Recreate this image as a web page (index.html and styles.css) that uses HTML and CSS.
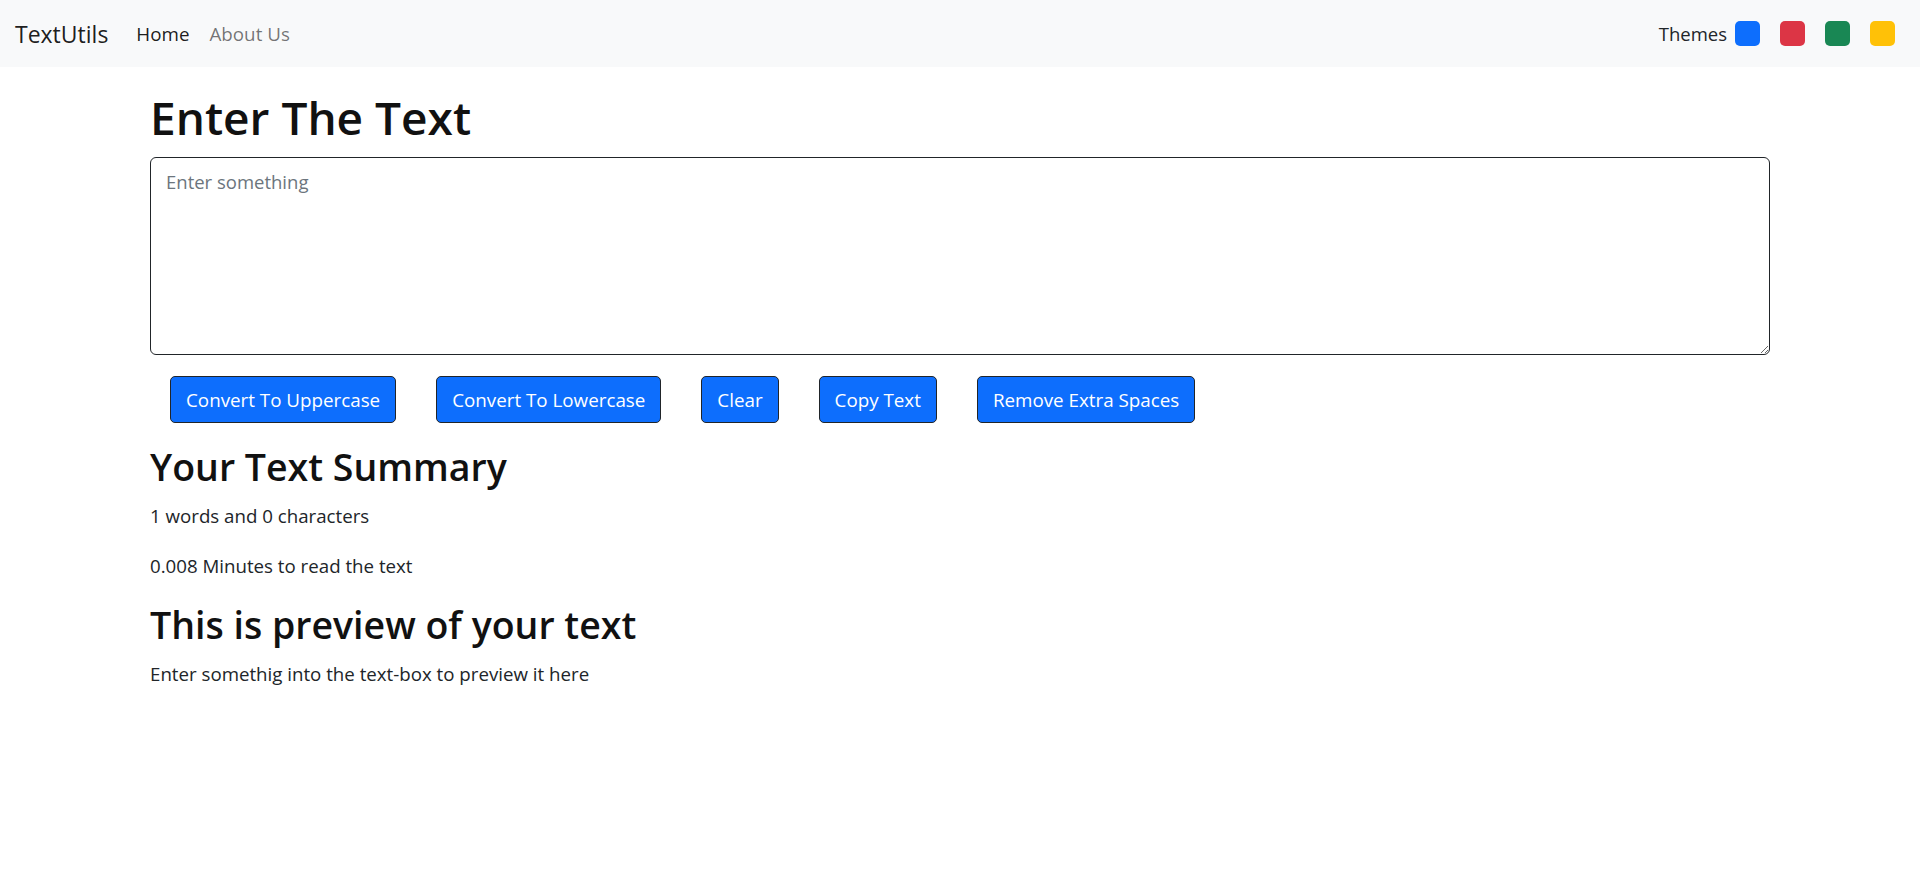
FILE: index.html
```html
<!DOCTYPE html>
<html lang="en">
<head>
<meta charset="utf-8">
<title>TextUtils</title>
<link rel="stylesheet" href="styles.css">
</head>
<body>
<nav class="navbar">
  <div class="nav-left">
    <a class="brand" href="#">TextUtils</a>
    <ul class="nav-links">
      <li><a class="nav-link active" href="#">Home</a></li>
      <li><a class="nav-link" href="#">About Us</a></li>
    </ul>
  </div>
  <div class="themes">
    <span class="themes-label">Themes</span>
    <span class="swatch sw-blue"></span>
    <span class="swatch sw-red"></span>
    <span class="swatch sw-green"></span>
    <span class="swatch sw-yellow"></span>
  </div>
</nav>
<main class="container">
  <h1 class="title">Enter The Text</h1>
  <textarea class="text-input" rows="6" placeholder="Enter something"></textarea>
  <div class="actions">
    <button class="btn">Convert To Uppercase</button>
    <button class="btn">Convert To Lowercase</button>
    <button class="btn">Clear</button>
    <button class="btn">Copy Text</button>
    <button class="btn">Remove Extra Spaces</button>
  </div>
  <h2 class="subtitle">Your Text Summary</h2>
  <p class="para">1 words and 0 characters</p>
  <p class="para">0.008 Minutes to read the text</p>
  <h2 class="subtitle">This is preview of your text</h2>
  <p class="para">Enter somethig into the text-box to preview it here</p>
</main>
</body>
</html>
```
FILE: styles.css
```css
* { box-sizing: border-box; }
html, body { margin: 0; padding: 0; }
body {
  font-family: "Open Sans", "Noto Sans", sans-serif;
  font-size: 18.7px;
  line-height: 30px;
  color: #212529;
  background: #fff;
}
.navbar {
  height: 67px;
  background: #f8f9fa;
  display: flex;
  align-items: center;
  justify-content: space-between;
  padding: 0 25px 0 15px;
}
.nav-left { display: flex; align-items: center; }
.brand {
  font-size: 23px;
  color: rgba(0,0,0,.9);
  text-decoration: none;
  margin-right: 18px;
}
.nav-links { list-style: none; margin: 0; padding: 0; display: flex; }
.nav-link {
  display: block;
  padding: 0 10px;
  font-size: 18.8px;
  color: rgba(0,0,0,.55);
  text-decoration: none;
}
.nav-link.active { color: rgba(0,0,0,.9); }
.themes { display: flex; align-items: center; gap: 20px; }
.themes-label { font-size: 18.5px; color: #212529; margin-right: -12px; }
.swatch { width: 25px; height: 25px; border-radius: 5px; display: block; }
.sw-blue { background: #0d6efd; }
.sw-red { background: #dc3545; }
.sw-green { background: #198754; }
.sw-yellow { background: #ffc107; }
.container {
  width: 1620px;
  margin: 20px auto 0;
}
.title {
  font-size: 46px;
  font-weight: 600;
  line-height: 60px;
  margin: 0 0 10px;
  color: #111;
}
.text-input {
  display: block;
  width: 100%;
  height: 198px;
  padding: 10px 15px;
  font-family: inherit;
  font-size: 18.5px;
  line-height: 1.5;
  border: 1px solid #212529;
  border-radius: 6px;
  resize: vertical;
  color: #212529;
}
.text-input::placeholder { color: #6c757d; }
.actions {
  display: flex;
  gap: 40px;
  padding-left: 20px;
  margin: 21px 0 20px;
}
.btn {
  height: 47px;
  padding: 0 15px;
  font-family: inherit;
  font-size: 18.8px;
  color: #fff;
  background: #0d6efd;
  border: 1px solid #212529;
  border-radius: 5px;
}
.subtitle {
  font-size: 37.5px;
  font-weight: 600;
  line-height: 48px;
  margin: 0 0 10px;
  color: #111;
}
.para { margin: 0 0 20px; }
```
